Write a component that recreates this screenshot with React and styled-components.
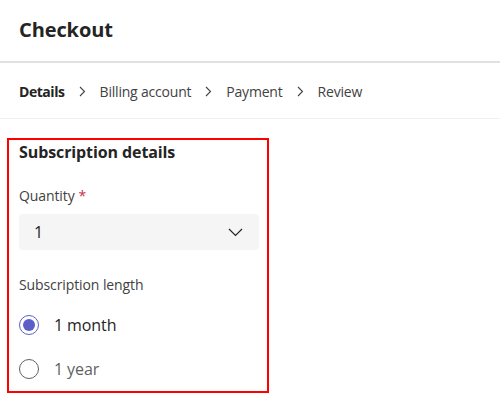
import React from "react";
import styled, { createGlobalStyle } from "styled-components";

const Global = createGlobalStyle`
  html, body { margin: 0; padding: 0; background: #ffffff; }
  body { font-family: "Open Sans", "Noto Sans", sans-serif; color: #242424; }
  * { box-sizing: border-box; }
`;

const Page = styled.div`
  width: 500px;
  height: 408px;
  background: #fff;
  overflow: hidden;
`;

const Header = styled.header`
  height: 63px;
  padding: 16px 0 0 19px;
  border-bottom: 2px solid #e1e1e1;
`;

const Title = styled.h1`
  margin: 0;
  font-size: 20px;
  line-height: 28px;
  font-weight: 700;
  color: #242424;
  letter-spacing: -0.1px;
`;

const Crumbs = styled.nav`
  height: 56px;
  display: flex;
  align-items: center;
  gap: 14px;
  padding: 2px 0 0 19px;
  border-bottom: 1px solid #f0f0f0;
`;

const Crumb = styled.span`
  font-size: 14px;
  letter-spacing: ${(p) => (p.$active ? "-0.45px" : "-0.2px")};
  font-weight: ${(p) => (p.$active ? 700 : 400)};
  color: ${(p) => (p.$active ? "#242424" : "#424242")};
`;

const Chevron = () => (
  <svg width="7" height="11" viewBox="0 0 7 11" fill="none">
    <path d="M1 1l4.5 4.5L1 10" stroke="#424242" strokeWidth="1.1" />
  </svg>
);

const Content = styled.main`
  padding: 19px 0 0 7px;
`;

const Highlight = styled.section`
  width: 262px;
  height: 255px;
  border: 2px solid #ff0000;
  padding: 1px 8px 0 10px;
  display: flex;
  flex-direction: column;
`;

const SectionTitle = styled.h2`
  margin: 0;
  font-size: 16px;
  line-height: 22px;
  font-weight: 700;
  color: #242424;
  letter-spacing: -0.1px;
`;

const Label = styled.div`
  margin-top: ${(p) => p.$mt || 0}px;
  font-size: 14px;
  line-height: 20px;
  color: #424242;
  letter-spacing: -0.1px;
`;

const Required = styled.span`
  color: #c4314b;
  margin-left: 4px;
`;

const Select = styled.div`
  margin-top: 8px;
  width: 240px;
  height: 39px;
  background: #f5f5f5;
  border-radius: 4px;
  display: flex;
  align-items: center;
  justify-content: space-between;
  padding: 0 16px 0 15px;
  font-size: 16px;
  color: #242424;
`;

const RadioRow = styled.label`
  display: flex;
  align-items: center;
  gap: 15px;
  height: 44px;
  font-size: 16px;
  letter-spacing: -0.1px;
  color: ${(p) => (p.$checked ? "#242424" : "#616161")};
`;

const RadioCircle = styled.span`
  width: 20px;
  height: 20px;
  border-radius: 50%;
  border: 1px solid ${(p) => (p.$checked ? "#5b5fc7" : "#616161")};
  display: flex;
  align-items: center;
  justify-content: center;
  &::after {
    content: "";
    display: ${(p) => (p.$checked ? "block" : "none")};
    width: 12px;
    height: 12px;
    border-radius: 50%;
    background: #5b5fc7;
  }
`;

const RadioGroup = styled.div`
  margin-top: 8px;
  display: flex;
  flex-direction: column;
`;

export default function App() {
  return (
    <Page>
      <Global />
      <Header>
        <Title>Checkout</Title>
      </Header>
      <Crumbs>
        <Crumb $active>Details</Crumb>
        <Chevron />
        <Crumb>Billing account</Crumb>
        <Chevron />
        <Crumb>Payment</Crumb>
        <Chevron />
        <Crumb>Review</Crumb>
      </Crumbs>
      <Content>
        <Highlight>
          <SectionTitle>Subscription details</SectionTitle>
          <Label $mt={23}>
            Quantity<Required>*</Required>
          </Label>
          <Select>
            <span>1</span>
            <svg width="15" height="9" viewBox="0 0 15 9" fill="none">
              <path d="M1 1l6.5 6.5L14 1" stroke="#242424" strokeWidth="1.2" />
            </svg>
          </Select>
          <Label $mt={25}>Subscription length</Label>
          <RadioGroup>
            <RadioRow $checked>
              <RadioCircle $checked />1 month
            </RadioRow>
            <RadioRow>
              <RadioCircle />1 year
            </RadioRow>
          </RadioGroup>
        </Highlight>
      </Content>
    </Page>
  );
}
